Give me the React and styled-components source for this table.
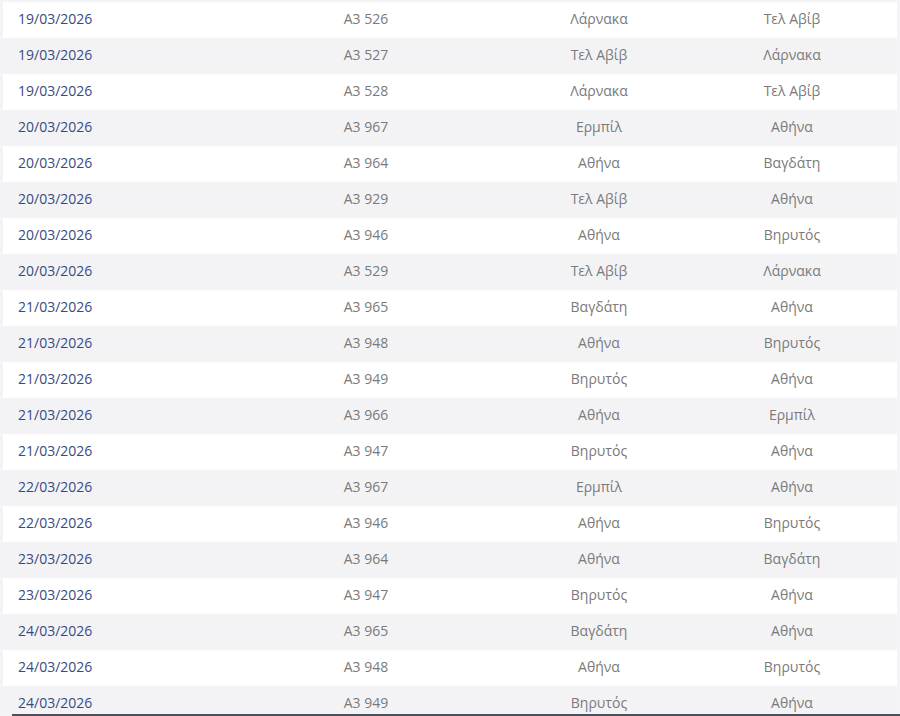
import React from "react";
import styled, { createGlobalStyle } from "styled-components";

const flights = [
  ["19/03/2026", "A3 526", "Λάρνακα", "Τελ Αβίβ"],
  ["19/03/2026", "A3 527", "Τελ Αβίβ", "Λάρνακα"],
  ["19/03/2026", "A3 528", "Λάρνακα", "Τελ Αβίβ"],
  ["20/03/2026", "A3 967", "Ερμπίλ", "Αθήνα"],
  ["20/03/2026", "A3 964", "Αθήνα", "Βαγδάτη"],
  ["20/03/2026", "A3 929", "Τελ Αβίβ", "Αθήνα"],
  ["20/03/2026", "A3 946", "Αθήνα", "Βηρυτός"],
  ["20/03/2026", "A3 529", "Τελ Αβίβ", "Λάρνακα"],
  ["21/03/2026", "A3 965", "Βαγδάτη", "Αθήνα"],
  ["21/03/2026", "A3 948", "Αθήνα", "Βηρυτός"],
  ["21/03/2026", "A3 949", "Βηρυτός", "Αθήνα"],
  ["21/03/2026", "A3 966", "Αθήνα", "Ερμπίλ"],
  ["21/03/2026", "A3 947", "Βηρυτός", "Αθήνα"],
  ["22/03/2026", "A3 967", "Ερμπίλ", "Αθήνα"],
  ["22/03/2026", "A3 946", "Αθήνα", "Βηρυτός"],
  ["23/03/2026", "A3 964", "Αθήνα", "Βαγδάτη"],
  ["23/03/2026", "A3 947", "Βηρυτός", "Αθήνα"],
  ["24/03/2026", "A3 965", "Βαγδάτη", "Αθήνα"],
  ["24/03/2026", "A3 948", "Αθήνα", "Βηρυτός"],
  ["24/03/2026", "A3 949", "Βηρυτός", "Αθήνα"],
];

const GlobalStyle = createGlobalStyle`
  html, body {
    margin: 0;
    padding: 0;
    height: 716px;
    overflow: hidden;
    background: #f4f4f6;
    font-family: "Open Sans", "Noto Sans", sans-serif;
  }
`;

const Page = styled.div`
  display: flex;
  flex-direction: column;
  padding: 2px 3px 0;
`;

const Table = styled.div`
  height: 712px;
  overflow: hidden;
`;

const Row = styled.div`
  display: grid;
  grid-template-columns: 218px 290px 176px 210px;
  box-sizing: border-box;
  height: 36px;
  padding-bottom: 3px;
  align-items: center;
  background: ${(p) => (p.striped ? "#f3f3f6" : "#ffffff")};
`;

const Cell = styled.div`
  font-size: 14px;
  color: ${(p) => (p.date ? "#3a4a7c" : "#7a7a7a")};
  text-align: ${(p) => (p.date ? "left" : "center")};
  padding-left: ${(p) => (p.date ? "15px" : "0")};
  white-space: nowrap;
`;

const BottomBar = styled.div`
  height: 2px;
  margin-left: 9px;
  margin-right: -3px;
  background: #4b5058;
`;

export default function App() {
  return (
    <>
      <GlobalStyle />
      <Page>
        <Table>
          {flights.map(([date, code, from, to], i) => (
            <Row key={i} striped={i % 2 === 1}>
              <Cell date>{date}</Cell>
              <Cell>{code}</Cell>
              <Cell>{from}</Cell>
              <Cell>{to}</Cell>
            </Row>
          ))}
        </Table>
        <BottomBar />
      </Page>
    </>
  );
}
